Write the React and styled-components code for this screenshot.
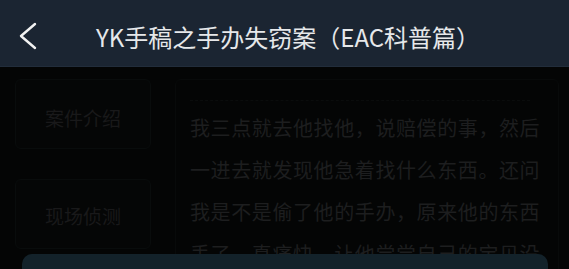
import React from "react"
import styled, { createGlobalStyle } from "styled-components"

const Global = createGlobalStyle`
  html, body { margin: 0; padding: 0; background: #040505; }
  * { box-sizing: border-box; }
`

const Screen = styled.div`
  position: relative;
  width: 569px;
  height: 269px;
  overflow: hidden;
  background: #040505;
  font-family: "Noto Sans CJK SC", "Noto Sans", sans-serif;
`

const TopBar = styled.header`
  height: 67px;
  padding-top: 6px;
  display: flex;
  align-items: center;
  background: #1b2532;
  border-bottom: 1px solid #222d3b;
`

const BackButton = styled.button`
  width: 56px;
  height: 40px;
  padding: 0 0 0 18px;
  border: 0;
  background: none;
  display: flex;
  align-items: center;
`

const Title = styled.h1`
  margin: 0 0 0 40px;
  font-size: 24px;
  font-weight: 400;
  color: #e6e8ea;
  white-space: nowrap;
`

const Body = styled.main`
  display: flex;
  gap: 24px;
  padding: 12px 10px 0 15px;
`

const Sidebar = styled.nav`
  width: 136px;
  display: flex;
  flex-direction: column;
  gap: 30px;
`

const Tab = styled.div`
  height: 70px;
  display: flex;
  align-items: center;
  justify-content: center;
  padding-top: ${p => (p.$first ? "6px" : "2px")};
  border: 1px solid #090c0c;
  border-radius: 6px;
  background: #050606;
  color: #19191a;
  font-size: 19px;
`

const Panel = styled.section`
  flex: 1;
  height: 240px;
  padding: 20px 0 0 14px;
  border: 1px solid #080a0a;
  border-radius: 6px;
  background: #040505;
`

const Divider = styled.div`
  width: 340px;
  border-top: 1px dashed #0a0c0c;
  margin-bottom: 6px;
`

const Story = styled.p`
  margin: 0;
  width: 356px;
  font-size: 20px;
  letter-spacing: 0.6px;
  line-height: 42px;
  color: #1d1e1f;
`

const Sheet = styled.div`
  position: absolute;
  left: 22px;
  right: 21px;
  top: 254px;
  height: 40px;
  border-radius: 10px 10px 0 0;
  background: #13222a;
`

const App = () => {
  return (
    <Screen>
      <Global />
      <TopBar>
        <BackButton aria-label="返回">
          <svg width="20" height="28" viewBox="0 0 20 28">
            <path d="M17 2 L3 14 L17 26" fill="none" stroke="#f2f2f2" strokeWidth="2.4" strokeLinecap="round" strokeLinejoin="round" />
          </svg>
        </BackButton>
        <Title>YK手稿之手办失窃案（EAC科普篇）</Title>
      </TopBar>
      <Body>
        <Sidebar>
          <Tab $first>案件介绍</Tab>
          <Tab>现场侦测</Tab>
        </Sidebar>
        <Panel>
          <Divider />
          <Story>
            我三点就去他找他，说赔偿的事，然后一进去就发现他急着找什么东西。还问我是不是偷了他的手办，原来他的东西丢了，真痛快，让他尝尝自己的宝贝没了的滋味。
          </Story>
        </Panel>
      </Body>
      <Sheet />
    </Screen>
  )
}

export default App
